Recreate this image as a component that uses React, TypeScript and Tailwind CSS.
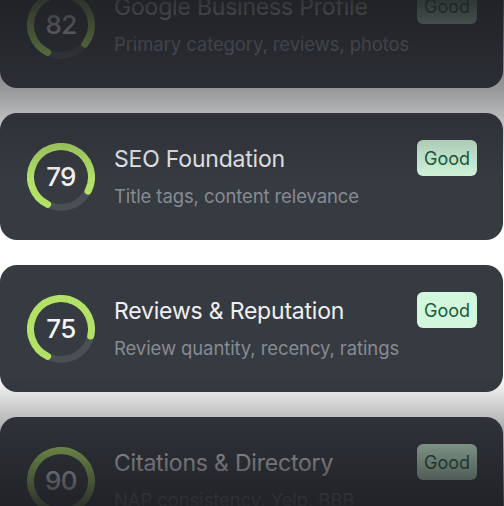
const items = [
  { score: 82, title: "Google Business Profile", detail: "Primary category, reviews, photos", status: "Good" },
  { score: 79, title: "SEO Foundation", detail: "Title tags, content relevance", status: "Good" },
  { score: 75, title: "Reviews & Reputation", detail: "Review quantity, recency, ratings", status: "Good" },
  { score: 90, title: "Citations & Directory", detail: "NAP consistency, Yelp, BBB", status: "Good" },
];

function ScoreRing({ score }: { score: number }) {
  const r = 30.5;
  const c = 2 * Math.PI * r;
  // round caps add a bit on each end, so trim the dash to keep the visible arc true
  const dash = Math.max(0, (score / 100) * c - 7);

  return (
    <div className="relative w-[68px] h-[68px] shrink-0">
      <svg width="68" height="68" viewBox="0 0 68 68" className="absolute inset-0">
        <circle cx="34" cy="34" r={r} fill="none" stroke="#4a4e55" strokeWidth="7" />
        <circle
          cx="34"
          cy="34"
          r={r}
          fill="none"
          stroke="#b3e168"
          strokeWidth="7"
          strokeLinecap="round"
          strokeDasharray={`${dash} ${c}`}
          transform="rotate(116 34 34)"
        />
      </svg>
      <div className="absolute inset-0 flex items-center justify-center text-[26px] font-medium text-[#f3f4f6] tracking-tight">
        {score}
      </div>
    </div>
  );
}

export default function App() {
  return (
    <div
      className="relative w-[504px] h-[506px] overflow-hidden bg-white"
      style={{ fontFamily: "Inter, 'Noto Sans', sans-serif" }}
    >
      <div className="-mt-[39px] flex flex-col gap-[25px] mr-px">
        {items.map((item) => (
          <div
            key={item.title}
            className="h-[127px] bg-[#363a41] rounded-[17px] flex items-start pl-[27px] pr-[26px]"
          >
            <div className="self-center">
              <ScoreRing score={item.score} />
            </div>
            <div className="flex-1 self-center ml-[19px] flex flex-col gap-[10px]">
              <h3 className="text-[23px] leading-[28px] text-[#eef0f2] tracking-[-0.2px]">{item.title}</h3>
              <p className="text-[18.5px] leading-[26px] text-[#878b92] tracking-[-0.1px]">{item.detail}</p>
            </div>
            <span className="mt-[27px] h-[36px] px-[7px] flex items-center rounded-[6px] bg-[#d2f7dc] text-[18px] text-[#1a5c38]">
              {item.status}
            </span>
          </div>
        ))}
      </div>

      {/* scroll fades */}
      <div className="pointer-events-none absolute top-0 left-0 right-0 h-[180px] bg-[linear-gradient(to_bottom,rgba(30,32,36,0.9),rgba(30,32,36,0))]" />
      <div className="pointer-events-none absolute bottom-0 left-0 right-0 h-[131px] bg-[linear-gradient(to_top,rgba(30,32,36,0.9),rgba(30,32,36,0))]" />
    </div>
  );
}
